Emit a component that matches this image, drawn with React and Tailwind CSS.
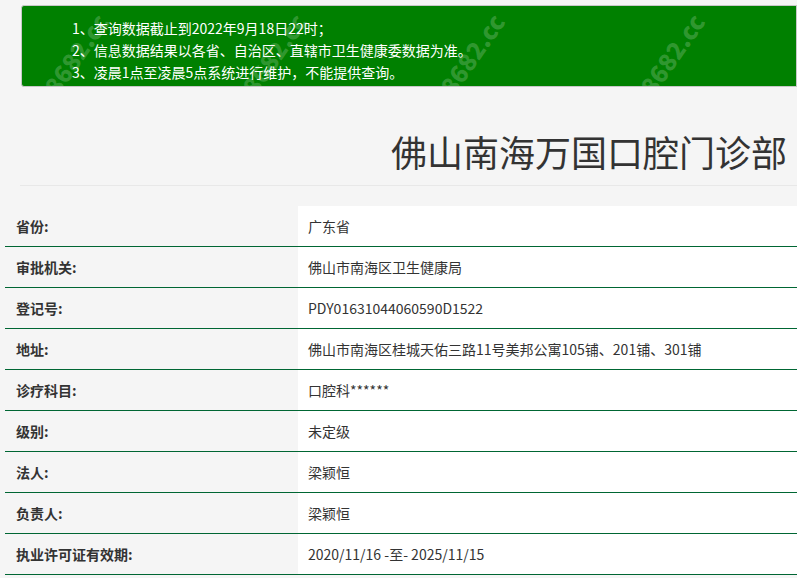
import React from 'react';

const rows = [
  ['省份:', '广东省'],
  ['审批机关:', '佛山市南海区卫生健康局'],
  ['登记号:', 'PDY01631044060590D1522'],
  ['地址:', '佛山市南海区桂城天佑三路11号美邦公寓105铺、201铺、301铺'],
  ['诊疗科目:', '口腔科******'],
  ['级别:', '未定级'],
  ['法人:', '梁颖恒'],
  ['负责人:', '梁颖恒'],
  ['执业许可证有效期:', '2020/11/16 -至- 2025/11/15'],
];

// watermark centres along the banner
const marks = [50, 248, 446, 646];

const App = () => {
  return (
    <div
      className="min-h-[578px] bg-[#f5f5f5] text-[#333] overflow-hidden"
      style={{ fontFamily: '"Microsoft YaHei", "Noto Sans CJK SC", sans-serif' }}
    >
      {/* notice banner */}
      <div className="pt-[5px]">
        <div className="relative ml-[21px] h-[82px] rounded-l-[3px] border border-[#c8c8c8] bg-[#008000] pl-[50px] pt-[11px] text-[14px] leading-[22px] text-white overflow-hidden">
          {marks.map((x) => (
            <span
              key={x}
              aria-hidden="true"
              className="absolute top-[36px] -rotate-[55deg] text-[24px] leading-none font-black text-white/20 whitespace-nowrap pointer-events-none select-none"
              style={{ left: x - 42 }}
            >
              8682.cc
            </span>
          ))}
          <p className="relative">1、查询数据截止到2022年9月18日22时；</p>
          <p className="relative">2、信息数据结果以各省、自治区、直辖市卫生健康委数据为准。</p>
          <p className="relative">3、凌晨1点至凌晨5点系统进行维护，不能提供查询。</p>
        </div>
      </div>

      {/* title */}
      <div className="ml-[20px] mt-[29px] h-[70px] border-b border-[#e8e8e8] pr-[10px] text-right">
        <h1 className="text-[36px] leading-[70px] font-normal text-[#333]">佛山南海万国口腔门诊部</h1>
      </div>

      {/* info table */}
      <div className="ml-[5px] mt-[20px]">
        {rows.map(([label, value]) => (
          <div key={label} className="flex h-[41px] border-b border-[#006633] text-[14px]">
            <div className="w-[293px] flex items-center pl-[11px] font-bold">{label}</div>
            <div className="flex-1 flex items-center bg-white pl-[10px]">{value}</div>
          </div>
        ))}
      </div>
    </div>
  );
};

export default App;
